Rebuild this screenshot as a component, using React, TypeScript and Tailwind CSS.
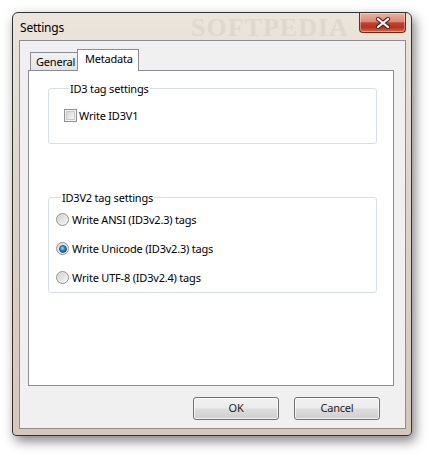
import React from 'react';

function CloseButton() {
  return (
    <div className="flex h-[20px] w-[47px] items-center justify-center rounded-b-[4px] border border-t-0 border-[#6b2a1e] bg-[linear-gradient(to_bottom,#ecb1a2_0%,#dc8a76_45%,#c2432c_52%,#b5331f_75%,#de6a43_100%)] shadow-[inset_0_0_0_1px_rgba(255,255,255,0.35)]">
      <svg width="16" height="12" viewBox="0 0 16 12">
        <path d="M3 2 L13 10 M13 2 L3 10" stroke="#4a2a24" strokeWidth="4.2" strokeLinecap="round" />
        <path d="M3 2 L13 10 M13 2 L3 10" stroke="#ffffff" strokeWidth="2.2" strokeLinecap="round" />
      </svg>
    </div>
  );
}

function Checkbox() {
  return (
    <div className="flex h-[13px] w-[13px] items-center justify-center border border-[#8f8f8f] bg-[#f4f4f4]">
      <div className="h-[9px] w-[9px] border border-[#c8c8c8] bg-[linear-gradient(135deg,#d7d7d7,#f6f6f6)]" />
    </div>
  );
}

function Radio({ checked }: { checked?: boolean }) {
  return (
    <div className="flex h-[13px] w-[13px] items-center justify-center rounded-full border border-[#8f8f8f] bg-[linear-gradient(135deg,#dadada,#fafafa)]">
      {checked ? (
        <div className="h-[8px] w-[8px] rounded-full border border-[#1c5180] bg-[radial-gradient(circle_at_40%_35%,#8ee0fc_0%,#2a8bcf_45%,#0d3d6b_100%)]" />
      ) : (
        <div className="h-[9px] w-[9px] rounded-full bg-[linear-gradient(135deg,#d2d2d2,#f4f4f4)]" />
      )}
    </div>
  );
}

function WinButton({ label }: { label: string }) {
  return (
    <div className="flex h-[23px] w-[86px] items-center justify-center rounded-[3px] border border-[#707070] bg-[linear-gradient(to_bottom,#f2f2f2_0%,#ebebeb_48%,#dddddd_52%,#cfcfcf_100%)] text-[#1e1e1e] shadow-[inset_0_0_0_1px_rgba(255,255,255,0.7)]">
      {label}
    </div>
  );
}

export default function App() {
  return (
    <div className="h-[456px] w-[433px] bg-white pl-[12px] pt-[12px] text-[11px] tracking-[-0.2px] text-black [font-family:'Noto_Sans',sans-serif]">
      <div className="flex h-[424px] w-[400px] flex-col rounded-t-[6px] rounded-b-[4px] border border-[#333333] bg-[linear-gradient(to_bottom,#ebe5dc_0%,#ddd5ca_40%,#d3c8ba_100%)] shadow-[3px_5px_12px_rgba(0,0,0,0.5)]">
        {/* title bar */}
        <div className="relative flex h-[27px] items-start justify-between pl-[7px] pr-[5px]">
          <span className="self-center pt-[1px] text-[12px] leading-[15px]">Settings</span>
          <span className="absolute left-[178px] top-[1px] font-bold tracking-[1px] text-[26px] leading-[28px] text-[#c9beb1] opacity-30 [font-family:'Liberation_Serif',serif]">
            SOFTPEDIA
          </span>
          <div className="relative z-10">
            <CloseButton />
          </div>
        </div>

        {/* client area */}
        <div className="mb-[6px] ml-[6px] mr-[5px] flex flex-1 flex-col border border-[#8d8d8d] bg-[#f0f0f0]">
          <div className="ml-[8px] mt-[8px] w-[366px]">
            {/* tabs */}
            <div className="ml-[2px] flex h-[21px] items-end">
              <div className="flex h-[18px] w-[48px] items-center border border-b-0 border-[#898c95] bg-[linear-gradient(to_bottom,#f2f2f2,#e3e3e3)] pl-[5px] leading-[15px]">
                General
              </div>
              <div className="relative z-10 -mb-px -ml-px flex h-[22px] w-[62px] items-start border border-b-0 border-[#898c95] bg-white pl-[7px] pt-[1px] leading-[15px]">
                Metadata
              </div>
            </div>

            {/* panel */}
            <div className="h-[316px] border border-[#898c95] bg-white">
              <fieldset className="ml-[19px] mt-[10px] w-[329px] rounded-[3px] border border-[#d5dfe5] pb-[20px] pl-[15px] pt-[12px]">
                <legend className="ml-[5px] px-[1px] leading-[15px]">ID3 tag settings</legend>
                <div className="flex items-center gap-[2px] leading-[15px]">
                  <Checkbox />
                  <span>Write ID3V1</span>
                </div>
              </fieldset>

              <fieldset className="ml-[19px] mt-[46px] w-[329px] rounded-[3px] border border-[#d5dfe5] pb-[7px] pl-[7px] pt-[7px]">
                <legend className="ml-[5px] px-[1px] leading-[15px]">ID3V2 tag settings</legend>
                <div className="flex flex-col gap-[14px] leading-[15px]">
                  <div className="flex h-[15px] items-center gap-[3px]">
                    <Radio />
                    <span>Write ANSI (ID3v2.3) tags</span>
                  </div>
                  <div className="flex h-[15px] items-center gap-[3px]">
                    <Radio checked />
                    <span>Write Unicode (ID3v2.3) tags</span>
                  </div>
                  <div className="flex h-[15px] items-center gap-[3px]">
                    <Radio />
                    <span>Write UTF-8 (ID3v2.4) tags</span>
                  </div>
                </div>
              </fieldset>
            </div>
          </div>

          {/* buttons */}
          <div className="mt-[11px] flex justify-end gap-[15px] pr-[25px]">
            <WinButton label="OK" />
            <WinButton label="Cancel" />
          </div>
        </div>
      </div>
    </div>
  );
}
